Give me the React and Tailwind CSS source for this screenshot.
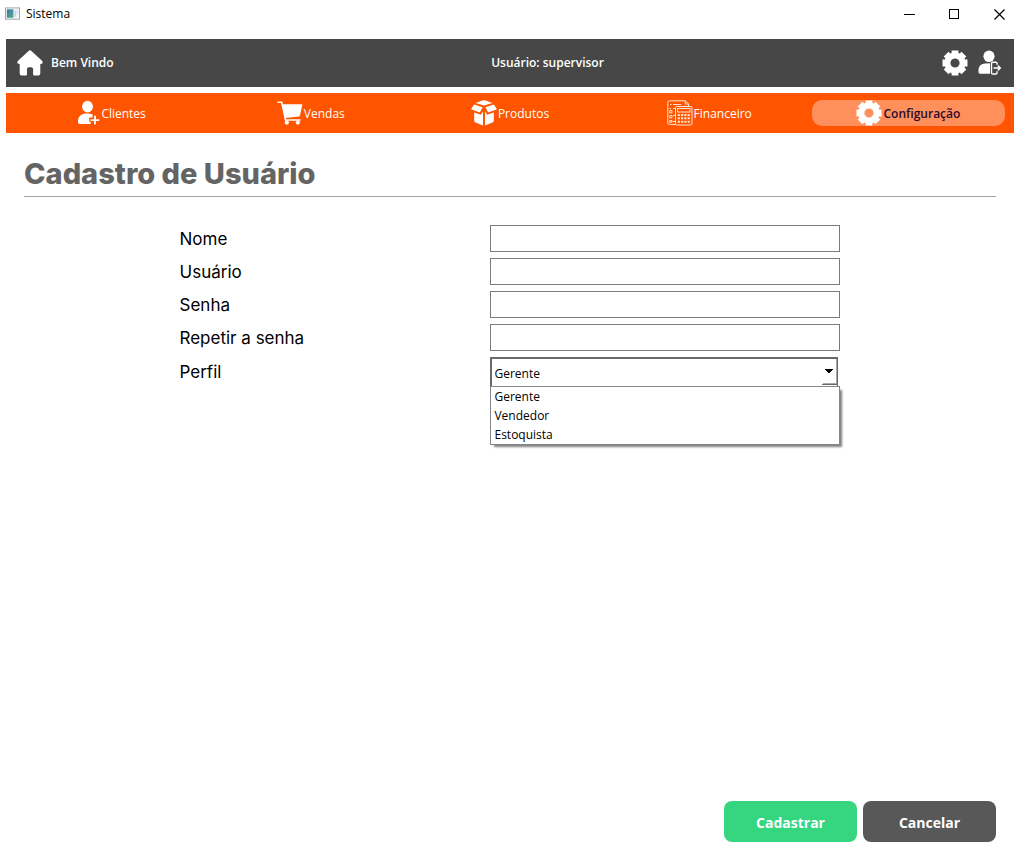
import { useState } from "react";

function WindowIcon() {
  return (
    <svg width="15" height="14" viewBox="0 0 16 14" aria-hidden="true">
      <defs>
        <linearGradient id="pane" x1="0" y1="0" x2="1" y2="1">
          <stop offset="0" stopColor="#3f78a8" />
          <stop offset="1" stopColor="#4fae86" />
        </linearGradient>
      </defs>
      <rect x="0.5" y="0.5" width="15" height="12" fill="#f6f8fa" stroke="#9aa0a8" />
      <rect x="2" y="2" width="7" height="9" fill="url(#pane)" />
      <rect x="10" y="3" width="2" height="7" fill="#c3d5e6" />
      <rect x="13" y="3" width="1" height="4" fill="#c3d5e6" />
    </svg>
  );
}

function HomeIcon() {
  return (
    <svg width="26" height="26" viewBox="0 0 26 26" fill="#fff" aria-hidden="true">
      <path d="M11.6.9Q13-.3 14.4.9L24.7 10.6Q26.4 12.4 25.2 13.6 24.7 14 23.3 14V23.6Q23.3 25.5 21.4 25.5H17.2Q16.1 25.5 16.1 24.4V19Q16.1 17.2 14.4 17.2H11.6Q10 17.2 10 19V24.4Q10 25.5 8.8 25.5H4.6Q2.7 25.5 2.7 23.6V14Q1.3 14 .8 13.6-.4 12.4 1.3 10.6Z" />
    </svg>
  );
}

function GearIcon() {
  return (
    <svg width="26" height="26" viewBox="0 0 26 26" aria-hidden="true">
      <g fill="none" stroke="#fff">
        <circle cx="13" cy="13" r="7.6" strokeWidth="6" />
        <path
          strokeWidth="6.8"
          d="M13 .5V5M13 21v4.5M.5 13H5M21 13h4.5M4.1 4.1l3.2 3.2M18.7 18.7l3.2 3.2M4.1 21.9l3.2-3.2M18.7 7.3l3.2-3.2"
        />
      </g>
    </svg>
  );
}

function LogoutUserIcon() {
  return (
    <svg width="24" height="26" viewBox="0 0 24 26" aria-hidden="true">
      <ellipse cx="11" cy="6.3" rx="5.6" ry="5.8" fill="#fff" />
      <path fill="#fff" d="M.5 22V19.5Q1.2 14 7 13.5L12 13.3V23.8H2Q.5 23.8.5 22Z" />
      <path
        fill="none"
        stroke="#fff"
        strokeWidth="1.4"
        d="M19 14.8V13.3Q19 12.2 17.9 12.2H14.8Q13.5 12.2 13.5 13.4V22.8Q13.5 24 14.8 24H17.9Q19 24 19 22.9V21.2M15.5 18H22M19.7 15.4 22.4 18 19.7 20.6"
      />
    </svg>
  );
}

function AddUserIcon() {
  return (
    <svg width="23" height="26" viewBox="0 0 23 26" aria-hidden="true">
      <ellipse cx="10.5" cy="6.6" rx="5.4" ry="5.8" fill="#fff" />
      <path
        fill="#fff"
        d="M1 22.3V20.3Q2 14.2 8 13.5 12.5 13 15.6 14.6V17.4H12.2V21.4H13.6V24H2.5Q1 24 1 22.3Z"
      />
      <path fill="none" stroke="#fff" strokeWidth="1.8" d="M18 15.8V24.4M13.7 20.1H22.3" />
    </svg>
  );
}

function CartIcon() {
  return (
    <svg width="26" height="26" viewBox="0 0 26 26" aria-hidden="true">
      <path fill="none" stroke="#fff" strokeWidth="1.6" d="M.5 2.2H4.7L8.5 20H23.5" />
      <path fill="#fff" d="M5.2 4.2H25.4L23 15.4Q22.8 16.4 21.7 16.5L8.2 18Z" />
      <circle cx="9.8" cy="22.6" r="2.1" fill="#fff" />
      <circle cx="20.8" cy="22.6" r="2.1" fill="#fff" />
    </svg>
  );
}

function BoxIcon() {
  return (
    <svg width="26" height="26" viewBox="0 0 26 26" fill="#fff" aria-hidden="true">
      <path d="M4.6 2.9 11.3.6Q13 .1 14.7.6L21.4 2.9 13 5.4Z" />
      <path d="M3.2 4.4 11.6 7.2 8.8 12.4 1.2 9.8Q-.1 9.3.6 8.2Z" />
      <path d="M22.8 4.4 14.4 7.2 17.2 12.4 24.8 9.8Q26.1 9.3 25.4 8.2Z" />
      <path d="M3.2 12.6 9.8 14.8 12 11.4V25.4L4.5 22.5Q3.2 22 3.2 20.5Z" />
      <path d="M22.8 12.6 16.2 14.8 14 11.4V25.4L21.5 22.5Q22.8 22 22.8 20.5Z" />
    </svg>
  );
}

function FinanceIcon() {
  return (
    <svg width="26" height="26" viewBox="0 0 26 26" fill="none" stroke="#ffe3d3" aria-hidden="true">
      <path d="M8 24.5H2.5Q.8 24.5.8 22.8V2.2Q.8.8 2.5.8H18.3L21.5 4V6M18.3.8V4H21.5" />
      <rect x="8.5" y="6.5" width="16.5" height="18.5" rx="1.2" />
      <rect x="10.5" y="8.5" width="12.5" height="3.5" />
      <path strokeWidth="2" strokeDasharray="2.2 1.1" d="M10.7 15H23.5M10.7 18.2H23.5M10.7 21.8H23.5" />
      <path d="M3 4.5H4.5M6 4.5H14M6 8.5H8M2.5 8.5H4M6 15.5H8M6 21.5H8" />
      <path d="M2.7 10.5H5V12.8H2.7ZM2.7 15.5H5V17.8H2.7ZM2.7 20.5H5V22.3H2.7Z" />
    </svg>
  );
}

const navItems = [
  { label: "Clientes", Icon: AddUserIcon },
  { label: "Vendas", Icon: CartIcon },
  { label: "Produtos", Icon: BoxIcon },
  { label: "Financeiro", Icon: FinanceIcon },
  { label: "Configuração", Icon: GearIcon, active: true },
];

const fields = [
  { id: "nome", label: "Nome", type: "text" },
  { id: "usuario", label: "Usuário", type: "text" },
  { id: "senha", label: "Senha", type: "password" },
  { id: "repetir", label: "Repetir a senha", type: "password" },
];

const profiles = ["Gerente", "Vendedor", "Estoquista"];

function TitleBar() {
  const control = "flex h-7 w-[45px] items-center justify-center";
  return (
    <div className="flex h-[39px] items-start justify-between">
      <div className="flex h-7 items-center gap-1.5 pl-[5px] text-xs text-black">
        <WindowIcon />
        <span>Sistema</span>
      </div>
      <div className="flex">
        <button className={control} aria-label="Minimizar">
          <svg width="11" height="11" stroke="#000" shapeRendering="crispEdges">
            <path d="M0 5.5H11" />
          </svg>
        </button>
        <button className={control} aria-label="Maximizar">
          <svg width="11" height="11" stroke="#000" fill="none" shapeRendering="crispEdges">
            <rect x="0.5" y="0.5" width="9" height="9" />
          </svg>
        </button>
        <button className={control} aria-label="Fechar">
          <svg width="11" height="11" stroke="#000" strokeWidth="1.2">
            <path d="M.5.5l10 10M10.5.5l-10 10" />
          </svg>
        </button>
      </div>
    </div>
  );
}

export default function App() {
  const [profile, setProfile] = useState("Gerente");

  return (
    <div className="flex min-h-screen flex-col bg-white font-['Open_Sans','Noto_Sans',sans-serif]">
      <TitleBar />

      <div className="flex flex-col gap-1.5 pr-2 pl-1.5">
        <header className="grid h-12 grid-cols-[1fr_auto_1fr] items-center bg-[#474747] pr-3 pl-[11px] text-xs font-semibold text-white">
          <div className="flex items-center gap-2">
            <button aria-label="Início">
              <HomeIcon />
            </button>
            <span>Bem Vindo</span>
          </div>
          <span className="pl-[76px]">Usuário: supervisor</span>
          <div className="flex items-center justify-end gap-2.5">
            <button aria-label="Configurações">
              <GearIcon />
            </button>
            <button aria-label="Sair">
              <LogoutUserIcon />
            </button>
          </div>
        </header>

        <nav className="flex h-10 items-center gap-1.5 bg-[#ff5500] px-[9px] text-xs">
          {navItems.map(({ label, Icon, active }) => (
            <button
              key={label}
              className={
                active
                  ? "flex h-[26px] flex-1 items-center justify-center gap-px rounded-[10px] bg-[#ff905b] font-semibold text-[#2b0a2e]"
                  : "flex h-[26px] flex-1 items-center justify-center gap-px text-white"
              }
            >
              <Icon />
              <span className="pt-px">{label}</span>
            </button>
          ))}
        </nav>
      </div>

      <main className="flex flex-1 flex-col pr-[26px] pb-[26px] pl-6">
        <h1 className="border-b border-[#a0a0a0] pt-[23px] pb-1 font-['Inter',sans-serif] text-[29px] leading-9 font-extrabold text-[#646464]">
          Cadastro de Usuário
        </h1>

        <form className="mt-7 flex flex-1 flex-col" onSubmit={(e) => e.preventDefault()}>
          <div className="mx-auto flex w-[68%] flex-col gap-1.5">
            {fields.map(({ id, label, type }) => (
              <div key={id} className="flex items-center justify-between">
                <label htmlFor={id} className="font-['Inter',sans-serif] text-[17px] leading-6 text-black">
                  {label}
                </label>
                <input
                  id={id}
                  type={type}
                  className="h-[27px] w-[350px] border border-[#7a7a7a] bg-white px-1 text-xs outline-none"
                />
              </div>
            ))}
            <div className="flex items-center justify-between">
              <label htmlFor="perfil" className="font-['Inter',sans-serif] text-[17px] leading-6 text-black">
                Perfil
              </label>
              <div className="relative w-[350px]">
                <select
                  id="perfil"
                  value={profile}
                  onChange={(e) => setProfile(e.target.value)}
                  className="block h-[29px] w-[348px] appearance-none border-t-2 border-r border-l-2 border-[#696969] bg-white pt-0.5 pl-0.5 text-xs text-black outline-none"
                >
                  {profiles.map((name) => (
                    <option key={name}>{name}</option>
                  ))}
                </select>
                <svg
                  className="pointer-events-none absolute top-0.5 right-0.5"
                  width="16"
                  height="26"
                  shapeRendering="crispEdges"
                  aria-hidden="true"
                >
                  <path d="M3 10h8v1h-1v1h-1v1h-1v1h-2v-1h-1v-1h-1v-1h-1z" fill="#000" />
                  <path d="M0 25.5H16M15.5 0V26" stroke="#696969" />
                  <path d="M1 24.5H15M14.5 0V25" stroke="#a8a8a8" />
                </svg>
                <ul
                  role="listbox"
                  aria-label="Perfil"
                  className="absolute top-full left-0 w-full border border-[#828790] bg-white text-xs leading-[19px] text-black shadow-[3px_3px_2px_-1px_rgba(0,0,0,0.5)]"
                >
                  {profiles.map((name) => (
                    <li
                      key={name}
                      role="option"
                      aria-selected={name === profile}
                      className="pl-[3px]"
                      onClick={() => setProfile(name)}
                    >
                      {name}
                    </li>
                  ))}
                </ul>
              </div>
            </div>
          </div>

          <div className="mt-auto flex justify-end gap-1.5 text-sm font-bold text-white">
            <button type="submit" className="h-[41px] w-[133px] rounded-lg bg-[#36d681] pt-0.5">
              Cadastrar
            </button>
            <button type="button" className="h-[41px] w-[133px] rounded-lg bg-[#585858] pt-0.5">
              Cancelar
            </button>
          </div>
        </form>
      </main>
    </div>
  );
}
